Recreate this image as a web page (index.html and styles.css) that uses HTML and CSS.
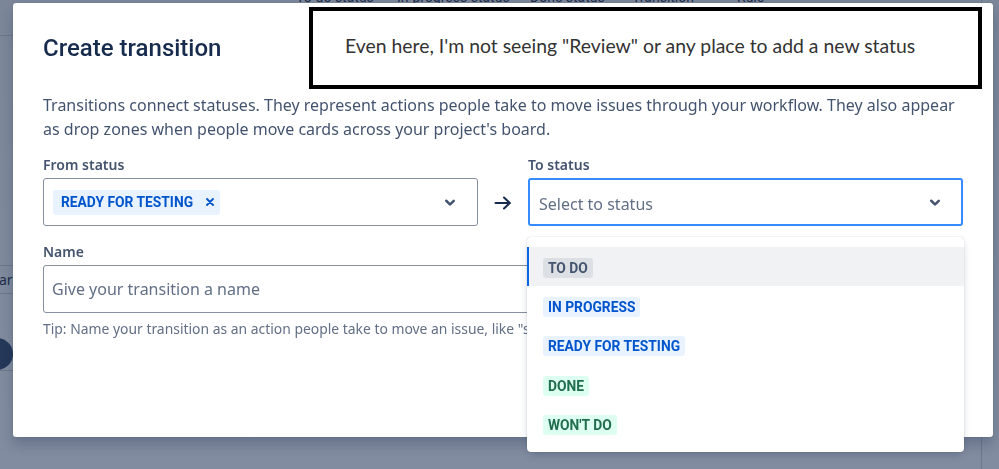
FILE: index.html
```html
<!DOCTYPE html>
<html lang="en">
<head>
<meta charset="utf-8">
<title>Create transition</title>
<link rel="stylesheet" href="styles.css">
</head>
<body>
<div class="page">
  <div class="page-main">
    <div class="cols">
      <span class="col c1">To-do status</span>
      <span class="col c2">In-progress status</span>
      <span class="col c3">Done status</span>
      <span class="col c4">Transition</span>
      <span class="col c5">Rule</span>
    </div>
    <div class="rule rule-top"></div>
    <div class="rule rule-mid"></div>
    <div class="side-row">ar</div>
    <div class="rule"></div>
    <div class="avatar"></div>
    <div class="rule"></div>
  </div>
  <div class="page-side"></div>
</div>

<div class="modal">
  <h1 class="modal-title">Create transition</h1>
  <p class="desc">Transitions connect statuses. They represent actions people take to move issues through your workflow. They also appear as drop zones when people move cards across your project's board.</p>

  <div class="status-row">
    <div class="field">
      <label class="field-label">From status</label>
      <div class="select">
        <span class="chip">READY FOR TESTING
          <svg class="chip-x" width="8" height="8" viewBox="0 0 8 8"><path d="M1 1L7 7M7 1L1 7" stroke="#0055cc" stroke-width="1.8" stroke-linecap="round"/></svg>
        </span>
        <svg class="chevron" width="30" height="30" viewBox="0 0 24 24"><path fill="#44546f" d="M8.292 10.293a1.009 1.009 0 000 1.419l2.939 2.965c.218.215.5.322.779.322s.556-.107.769-.322l2.93-2.955a1.01 1.01 0 000-1.419.987.987 0 00-1.406 0l-2.298 2.317-2.307-2.327a.99.99 0 00-1.406 0z"/></svg>
      </div>
    </div>
    <div class="arrow">
      <svg width="18" height="14" viewBox="0 0 18 14"><path d="M1.5 7H16M10 1.5L15.8 7L10 12.5" fill="none" stroke="#172b4d" stroke-width="2" stroke-linecap="round" stroke-linejoin="round"/></svg>
    </div>
    <div class="field field-to">
      <label class="field-label">To status</label>
      <div class="select select-focus">
        <span class="placeholder">Select to status</span>
        <svg class="chevron" width="30" height="30" viewBox="0 0 24 24"><path fill="#44546f" d="M8.292 10.293a1.009 1.009 0 000 1.419l2.939 2.965c.218.215.5.322.779.322s.556-.107.769-.322l2.93-2.955a1.01 1.01 0 000-1.419.987.987 0 00-1.406 0l-2.298 2.317-2.307-2.327a.99.99 0 00-1.406 0z"/></svg>
      </div>
      <div class="menu">
        <div class="option active"><span class="lozenge lz-grey">TO DO</span></div>
        <div class="option"><span class="lozenge lz-blue">IN PROGRESS</span></div>
        <div class="option"><span class="lozenge lz-blue">READY FOR TESTING</span></div>
        <div class="option"><span class="lozenge lz-green">DONE</span></div>
        <div class="option"><span class="lozenge lz-green">WON'T DO</span></div>
      </div>
    </div>
  </div>

  <div class="name-field">
    <label class="field-label">Name</label>
    <div class="input"><span class="placeholder">Give your transition a name</span></div>
  </div>
  <p class="tip">Tip: Name your transition as an action people take to move an issue, like "start progress" or "send for review".</p>
</div>

<div class="note">Even here, I'm not seeing "Review" or any place to add a new status</div>
</body>
</html>
```

FILE: styles.css
```css
html, body {
  margin: 0;
  height: 100%;
}

body {
  font-family: "Noto Sans", "Open Sans", sans-serif;
  background: #7d889b;
  overflow: hidden;
}

/* dimmed page behind the modal */
.page {
  position: fixed;
  inset: 0;
  display: grid;
  grid-template-columns: 981px 1fr;
  background: linear-gradient(#7b8699, #828ca0);
}

.page-main {
  overflow: hidden;
}

.page-side {
  border-left: 1px solid #6d788b;
}

.cols {
  display: flex;
  margin-top: -11px;
  padding-left: 296px;
  height: 16px;
  font-family: Roboto, sans-serif;
  font-size: 14px;
  line-height: 16px;
  color: #1f2e4a;
  white-space: nowrap;
}

.col { flex: none; }
.c1 { width: 101px; }
.c2 { width: 133px; }
.c3 { width: 102px; }
.c4 { width: 105px; }

.rule {
  height: 1px;
  background: #6c778a;
}

.rule-top { margin-top: 30px; }
.rule-mid { margin-top: 229px; }

.side-row {
  height: 27px;
  line-height: 27px;
  font-size: 14px;
  color: #1d2c47;
  margin-left: -1px;
}

.avatar {
  margin-top: 44px;
  margin-left: -19px;
  width: 32px;
  height: 32px;
  border-radius: 50%;
  background: #25385a;
}

/* modal */
.modal {
  position: absolute;
  left: 13px;
  top: 3px;
  width: 980px;
  height: 434px;
  box-sizing: border-box;
  padding: 31px 30px 0;
  background: #fff;
  border-radius: 3px;
  box-shadow: 0 8px 12px rgba(9, 30, 66, 0.22), 0 0 1px rgba(9, 30, 66, 0.31);
}

.modal-title {
  margin: 0;
  font-family: Roboto, sans-serif;
  font-size: 24px;
  line-height: 28px;
  font-weight: 500;
  color: #172b4d;
}

.desc {
  margin: 31px 0 0;
  font-size: 16px;
  line-height: 24px;
  color: #44546f;
}

.status-row {
  display: grid;
  grid-template-columns: 1fr 50px 1fr;
  align-items: end;
  margin-top: 16px;
}

.field {
  position: relative;
}

.field-label {
  display: block;
  font-size: 14px;
  line-height: 16px;
  font-weight: 600;
  color: #44546f;
  margin-bottom: 5px;
}

.select {
  height: 48px;
  box-sizing: border-box;
  border: 1px solid #8590a2;
  border-radius: 3px;
  display: flex;
  align-items: center;
  padding: 0 12px 0 9px;
  background: #fff;
}

.select-focus {
  border: 2px solid #388bff;
  padding: 0 11px 0 9px;
}

.chevron {
  margin-left: auto;
  flex: none;
}

.chip {
  display: inline-flex;
  align-items: center;
  gap: 13px;
  height: 25px;
  padding: 0 6px 0 8px;
  background: #e9f2ff;
  border-radius: 3px;
  color: #0055cc;
  font-family: Roboto, sans-serif;
  font-weight: 700;
  font-size: 13.8px;
}

.placeholder {
  font-size: 16px;
  color: #626f86;
}

.select-focus .placeholder {
  margin-top: 3px;
}

.arrow {
  height: 48px;
  display: flex;
  align-items: center;
  justify-content: center;
  padding-top: 2px;
  box-sizing: border-box;
}

.name-field {
  margin-top: 18px;
}

.input {
  height: 48px;
  box-sizing: border-box;
  border: 1px solid #8590a2;
  border-radius: 3px;
  display: flex;
  align-items: center;
  padding: 0 8px;
}

.tip {
  margin: 8px 0 0;
  font-size: 13.9px;
  line-height: 16px;
  color: #626f86;
  white-space: nowrap;
}

/* dropdown menu */
.menu {
  position: absolute;
  z-index: 2;
  top: calc(100% + 11px);
  left: -1px;
  right: -1px;
  padding: 10px 0 8px;
  background: #fff;
  border-radius: 4px;
  box-shadow: 0 4px 8px -2px rgba(9, 30, 66, 0.25), 0 0 1px rgba(9, 30, 66, 0.31);
}

.option {
  height: 39.4px;
  display: flex;
  align-items: center;
  padding-left: 14px;
  padding-top: 2px;
  box-sizing: border-box;
  border-left: 2px solid transparent;
}

.option.active {
  background: #f1f2f4;
  border-left-color: #0c66e4;
}

.lozenge {
  display: inline-block;
  height: 20px;
  line-height: 20px;
  padding: 0 5px;
  border-radius: 3px;
  font-family: Roboto, sans-serif;
  font-size: 13.8px;
  font-weight: 700;
}

.lz-grey { background: #dcdfe4; color: #44546f; }
.lz-blue { background: #e9f2ff; color: #0055cc; }
.lz-green { background: #dcfff1; color: #216e4e; }

/* annotation overlay */
.note {
  position: absolute;
  z-index: 5;
  left: 309px;
  top: 7px;
  width: 673px;
  height: 82px;
  box-sizing: border-box;
  border: 4px solid #000;
  background: #fff;
  display: flex;
  align-items: center;
  padding: 0 0 5px 32px;
  font-family: Lato, "Noto Sans", sans-serif;
  font-size: 19.4px;
  color: #333;
  white-space: nowrap;
}
```
